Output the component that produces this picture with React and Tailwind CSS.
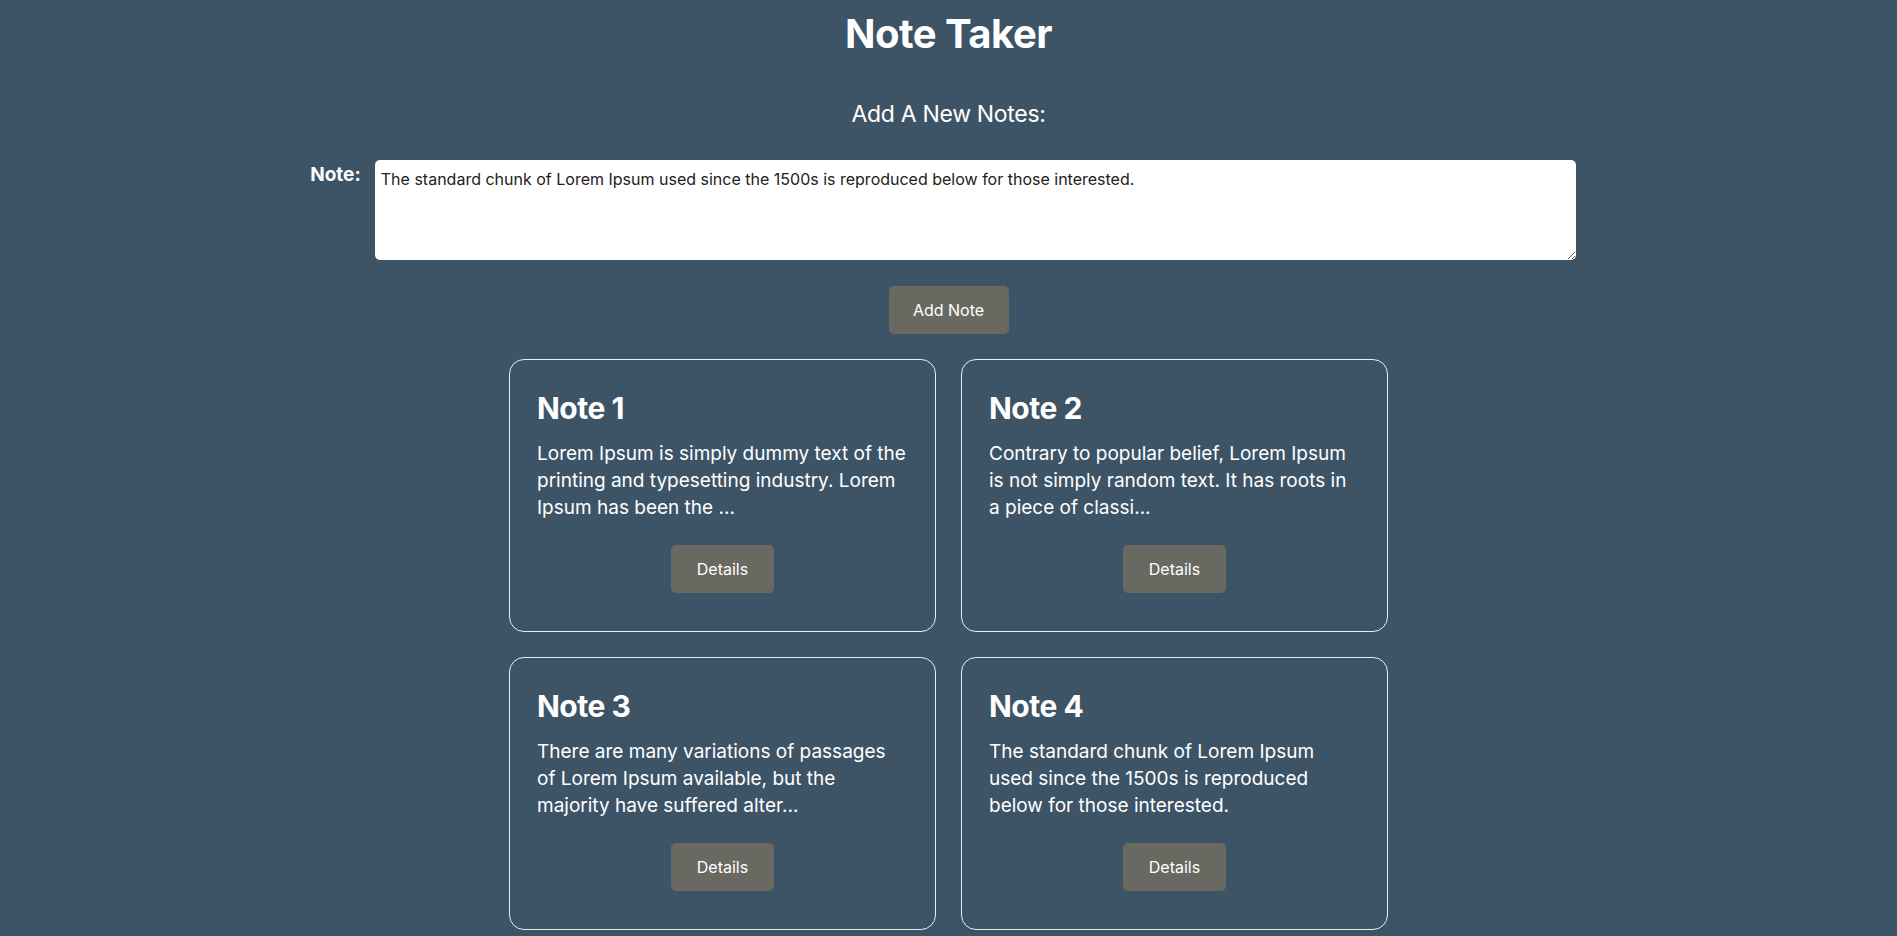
import React, { useState } from 'react';

const notes = [
  {
    id: 1,
    title: 'Note 1',
    body: 'Lorem Ipsum is simply dummy text of the printing and typesetting industry. Lorem Ipsum has been the ...',
  },
  {
    id: 2,
    title: 'Note 2',
    body: 'Contrary to popular belief, Lorem Ipsum is not simply random text. It has roots in a piece of classi...',
  },
  {
    id: 3,
    title: 'Note 3',
    body: 'There are many variations of passages of Lorem Ipsum available, but the majority have suffered alter...',
  },
  {
    id: 4,
    title: 'Note 4',
    body: 'The standard chunk of Lorem Ipsum used since the 1500s is reproduced below for those interested.',
  },
];

const NoteCard = ({ note }) => (
  <div className="flex flex-col h-[273px] border border-white/90 rounded-[15px] px-[27px] pt-[26px]">
    <h2 className="text-[30px] leading-[44px] font-bold tracking-[-0.5px]">{note.title}</h2>
    <p className="mt-[10px] text-[19px] leading-[27px]">{note.body}</p>
    <div className="mt-auto mb-[38px] flex justify-center">
      <button className="w-[103px] h-[48px] rounded-[5px] bg-[#696961] text-white text-base">
        Details
      </button>
    </div>
  </div>
);

export default function App() {
  const [text, setText] = useState(
    'The standard chunk of Lorem Ipsum used since the 1500s is reproduced below for those interested.'
  );

  return (
    <div className="min-h-screen bg-[#3d5467] text-white font-['Inter',sans-serif] pb-10">
      <h1 className="pt-[10px] text-center text-[40px] leading-[48px] font-bold tracking-[-0.5px]">Note Taker</h1>

      <h3 className="mt-[41px] text-center text-[23px] leading-[30px] tracking-[-0.3px]">Add A New Notes:</h3>

      <div className="mt-[31px] flex justify-center pr-[11px]">
        <label className="mt-[1px] mr-[14px] text-[19px] font-bold">Note:</label>
        <textarea
          value={text}
          onChange={(e) => setText(e.target.value)}
          className="w-[1201px] h-[100px] rounded-[5px] bg-white text-[#222] text-base leading-[22px] px-[6px] pt-[8px] outline-none"
        />
      </div>

      <div className="mt-[26px] flex justify-center">
        <button className="w-[120px] h-[48px] rounded-[5px] bg-[#696961] text-white text-base">Add Note</button>
      </div>

      <div className="mt-[25px] grid grid-cols-[427px_427px] justify-center gap-[25px]">
        {notes.map((n) => (
          <NoteCard key={n.id} note={n} />
        ))}
      </div>
    </div>
  );
}
